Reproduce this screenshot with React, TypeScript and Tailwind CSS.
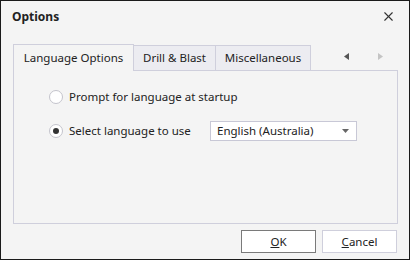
import { X } from 'lucide-react';

function Radio({ checked }: { checked?: boolean }) {
  return (
    <span className="w-[14px] h-[14px] rounded-full border border-[#c4c4cc] bg-white flex items-center justify-center shrink-0">
      {checked && <span className="w-[6px] h-[6px] rounded-full bg-[#333]" />}
    </span>
  );
}

export default function App() {
  return (
    <div
      className="w-[410px] h-[260px] border border-[#1a1a1a] bg-[#f4f4f4] flex flex-col text-[11.5px] text-[#222]"
      style={{ fontFamily: '"Noto Sans", "Open Sans", sans-serif' }}
    >
      <div className="h-[31px] pl-[11px] pr-[13px] flex items-center justify-between">
        <span className="font-bold text-[12px]">Options</span>
        <X size={15} strokeWidth={1.8} className="text-[#333]" />
      </div>

      <div className="mt-[12px] px-[12px] flex flex-col">
        <div className="flex items-end h-[26px]">
          <div className="h-[27px] w-[121px] -mb-px relative z-10 border border-b-0 border-[#cfcfdc] bg-[#f4f4f4] flex items-center justify-center">
            Language Options
          </div>
          <div className="h-[25px] w-[83px] -ml-px border border-b-0 border-[#cfcfdc] bg-[#ececf1] flex items-center justify-center">
            Drill &amp; Blast
          </div>
          <div className="h-[25px] w-[96px] -ml-px border border-b-0 border-[#cfcfdc] bg-[#ececf1] flex items-center justify-center">
            Miscellaneous
          </div>
          <div className="flex-1 h-[25px] flex items-center justify-end gap-[29px] pr-[14px] pb-[2px]">
            <svg width="5" height="7" viewBox="0 0 5 7"><path d="M5 0 L0 3.5 L5 7 Z" fill="#555" /></svg>
            <svg width="5" height="7" viewBox="0 0 5 7"><path d="M0 0 L5 3.5 L0 7 Z" fill="#c4c4c4" /></svg>
          </div>
        </div>

        <div className="h-[154px] w-[385px] border border-[#cfcfdc] bg-[#f4f4f4] pl-[35px] pt-[18px] flex flex-col">
          <div className="h-[16px] flex items-center gap-[6px]">
            <Radio />
            <span>Prompt for language at startup</span>
          </div>
          <div className="mt-[16px] h-[20px] flex items-center">
            <div className="w-[161px] flex items-center gap-[6px]">
              <Radio checked />
              <span>Select language to use</span>
            </div>
            <div className="w-[147px] h-[20px] border border-[#c8c8d6] bg-white flex items-center justify-between pl-[6px] pr-[7px]">
              <span>English (Australia)</span>
              <svg width="7" height="4" viewBox="0 0 7 4"><path d="M0 0 L7 0 L3.5 4 Z" fill="#666" /></svg>
            </div>
          </div>
        </div>
      </div>

      <div className="mt-[6px] pr-[12px] flex justify-end gap-[6px]">
        <button className="w-[75px] h-[23px] border border-[#7a7a7a] bg-white flex items-center justify-center">
          <span><span className="underline">O</span>K</span>
        </button>
        <button className="w-[75px] h-[23px] border border-[#cfcfdc] bg-white flex items-center justify-center">
          <span><span className="underline">C</span>ancel</span>
        </button>
      </div>
    </div>
  );
}
